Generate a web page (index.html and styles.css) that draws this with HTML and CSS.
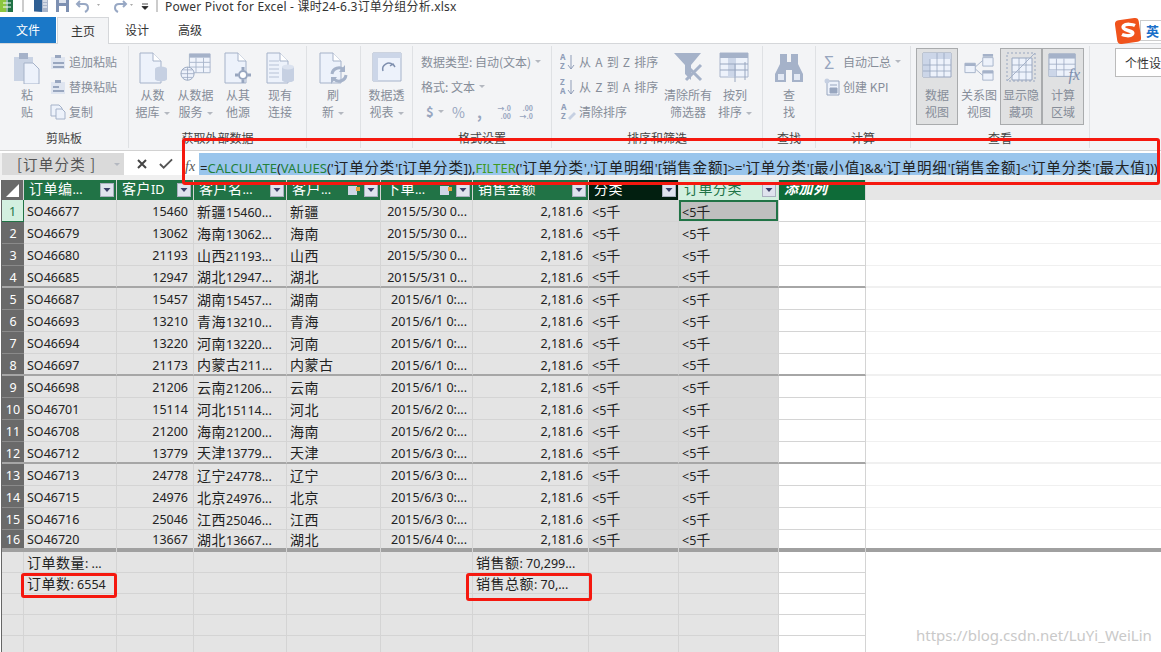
FILE: index.html
```html
<!DOCTYPE html>
<html lang="zh">
<head>
<meta charset="utf-8">
<title>Power Pivot for Excel</title>
<link rel="stylesheet" href="styles.css">
</head>
<body>
<div class="app">
  <div class="titlebar">
    <svg class="qat" width="160" height="17" viewBox="0 0 160 17">
      <rect x="0" y="-3" width="13" height="15" fill="#8cc63f"/><path d="M6-3h7v15H6z" fill="#217346"/><path d="M3 3h8M3 7h8M7-3v15" stroke="#fff"/>
      <path d="M23 0v12" stroke="#999"/>
      <path d="M34-2h14v14H34z" fill="#a9b5cb"/><path d="M34-1l8-1v14l-8-1z" fill="#2f5f94"/><path d="M43 1h4M43 4h4M43 7h4" stroke="#fff"/>
      <path d="M56-2h13v14H56z" fill="#7d90b2"/><path d="M59-2h7v5h-7z" fill="#dfe5f0"/><path d="M59 6h7v6h-7z" fill="#fff"/>
      <path d="M80 1l-3 3 3 3M77 4h7c3 0 4 2 4 4s-1 3-3 4" fill="none" stroke="#98a8c4" stroke-width="2"/>
      <path d="M97 4h3l-1.500 2z" fill="#aaa"/>
      <path d="M123 1l3 3-3 3M126 4h-7c-3 0-4 2-4 4s1 3 3 4" fill="none" stroke="#98a8c4" stroke-width="2"/>
      <path d="M130 4h3l-1.500 2z" fill="#aaa"/>
      <path d="M142 4h6M142 6.500h6l-3 3z" fill="#222" stroke="#222" stroke-width=".8"/>
      <path d="M157 0v12" stroke="#999"/>
    </svg>
    <span class="doc">Power Pivot for Excel - 课时24-6.3订单分组分析.xlsx</span>
  </div>

  <div class="tabs">
    <span class="tab file">文件</span>
    <span class="tab active">主页</span>
    <span class="tab design">设计</span>
    <span class="tab adv">高级</span>
  </div>

  <div class="ribbon">
    <section class="grp g1">
      <div class="big w-paste">
        <svg class="ico" viewBox="0 0 28 32"><path d="M1 5h19v24H1z" fill="#c9d3e4"/><path d="M6 1h9v6H6z" fill="#a5b2c9"/><path d="M11 11h9l6 6v15H11z" fill="#edf2fb" stroke="#a5b2c9"/></svg>
        <span>粘</span><span>贴</span>
      </div>
      <div class="smalls s-paste">
        <div class="sm"><svg class="si" viewBox="0 0 16 16"><path d="M1 3h14v12H1z" fill="#dfe5f0"/><path d="M5 1h6v3H5zM3 8h11v2H3zM3 12h11v2H3z" fill="#98a6bf"/></svg>追加粘贴</div>
        <div class="sm"><svg class="si" viewBox="0 0 16 16"><path d="M1 3h14v12H1z" fill="#dfe5f0"/><path d="M5 1h6v3H5zM3 7h6v2H3zM3 11h11v2H3z" fill="#98a6bf"/></svg>替换粘贴</div>
        <div class="sm"><svg class="si" viewBox="0 0 16 16"><path d="M1 1h8l3 3v8H1z" fill="#edf2fb" stroke="#a5b2c9"/><path d="M6 5h6l3 3v7H6z" fill="#edf2fb" stroke="#a5b2c9"/></svg>复制</div>
      </div>
      <div class="glabel">剪贴板</div>
    </section>

    <section class="grp g2">
      <div class="big w43">
        <svg class="ico" viewBox="0 0 30 32"><use href="#doc"/><ellipse cx="23" cy="17" rx="6" ry="2.500" fill="#c6d0e2"/><path d="M17 17h12v10c0 3-12 3-12 0z" fill="#c6d0e2"/></svg>
        <span>从数</span><span>据库<b class="ar"></b></span>
      </div>
      <div class="big w43">
        <svg class="ico" viewBox="0 0 34 32"><path d="M10 1h22v20H10z" fill="#f0f4fc" stroke="#aab6cc"/><path d="M10 1h22v4H10z" fill="#a5b2c9"/><path d="M10 10h22M10 15h22M17 5v16M25 5v16" stroke="#aab6cc"/><circle cx="8" cy="22" r="7" fill="#edf2fb" stroke="#98a6bf"/><path d="M1 22h14M8 15v14M3 18h10M3 26h10" stroke="#98a6bf" stroke-width=".8"/></svg>
        <span>从数据</span><span>服务<b class="ar"></b></span>
      </div>
      <div class="big w42">
        <svg class="ico" viewBox="0 0 30 32"><use href="#doc"/><circle cx="20" cy="23" r="4" fill="#fff" stroke="#98a6bf" stroke-width="2"/><path d="M20 15v3M20 28v3M12 23h3M25 23h3" stroke="#98a6bf" stroke-width="3"/></svg>
        <span>从其</span><span>他源</span>
      </div>
      <div class="big w42">
        <svg class="ico" viewBox="0 0 30 32"><use href="#doc"/><path d="M4 9h10M4 13h10M4 17h10M4 21h10M4 25h10" stroke="#b7c2d6"/><path d="M17 15h12v13c0 3-12 3-12 0z" fill="#c6d0e2"/><ellipse cx="23" cy="15" rx="6" ry="2.500" fill="#dbe2ef"/></svg>
        <span>现有</span><span>连接</span>
      </div>
      <div class="glabel">获取外部数据</div>
    </section>

    <section class="grp g3">
      <div class="big w53">
        <svg class="ico" viewBox="0 0 30 32"><use href="#doc"/><path d="M14 22a7 7 0 0 1 12-4M28 23a7 7 0 0 1-12 4" fill="none" stroke="#a5b2c9" stroke-width="3"/><path d="M27 13v7h-6zM13 32v-7h6z" fill="#a5b2c9"/></svg>
        <span>刷</span><span>新<b class="ar"></b></span>
      </div>
    </section>

    <section class="grp g4">
      <div class="big w52">
        <svg class="ico" viewBox="0 0 30 32"><path d="M1 1h28v28H1z" fill="#edf2fb" stroke="#a5b2c9"/><path d="M1 1h28v5H1zM1 1h5v28H1z" fill="#ccd6e8"/><path d="M11 19a6 6 0 0 1 10-6M23 15l-2-3-3 2" fill="none" stroke="#7e8fae" stroke-width="1.500"/></svg>
        <span>数据透</span><span>视表<b class="ar"></b></span>
      </div>
    </section>

    <section class="grp g5">
      <div class="smalls s-fmt">
        <div class="sm">数据类型: 自动(文本)<b class="ar"></b></div>
        <div class="sm">格式: 文本<b class="ar"></b></div>
        <div class="sm fmt-icons"><span class="dollar">$</span><b class="ar"></b><span class="pct">%</span><span class="cma">,</span><span class="dec">→.0<br>.00</span><span class="dec">.00<br>→.0</span></div>
      </div>
      <div class="glabel">格式设置</div>
    </section>

    <section class="grp g6">
      <div class="smalls s-sort">
        <div class="sm"><svg class="si" viewBox="0 0 16 18"><use href="#sortaz"/></svg>从 A 到 Z 排序</div>
        <div class="sm"><svg class="si" viewBox="0 0 16 18"><use href="#sortza"/></svg>从 Z 到 A 排序</div>
        <div class="sm"><svg class="si" viewBox="0 0 16 18"><text x="1" y="7" class="az">A</text><text x="1" y="16" class="az">Z</text><path d="M8 15l6-6 2 2-6 6z" fill="#c6d0e2"/></svg>清除排序</div>
      </div>
      <div class="big w-clear">
        <svg class="ico" viewBox="0 0 30 32"><path d="M1 1h27l-10 12v15l-6-6v-9z" fill="#a5b2c9"/><path d="M13 13l15 15M28 13L13 28" stroke="#a5b2c9" stroke-width="3"/></svg>
        <span>清除所有</span><span>筛选器</span>
      </div>
      <div class="big w-bycol">
        <svg class="ico" viewBox="0 0 32 32"><path d="M1 1h28v24H1z" fill="#edf2fb" stroke="#aab6cc"/><path d="M1 1h28v5H1z" fill="#a5b2c9"/><path d="M9 6h8v19H9z" fill="#ccd6e8"/><path d="M16 12v18M26 10v18M1 12h28M1 18h28" stroke="#98a6bf"/></svg>
        <span>按列</span><span>排序<b class="ar"></b></span>
      </div>
      <div class="glabel">排序和筛选</div>
    </section>

    <section class="grp g7">
      <div class="big w53">
        <svg class="ico" viewBox="0 0 30 32"><path d="M6 2h7v8h4V2h7v10l5 10v8H18V18h-6v12H1v-8l5-10z" fill="#a5b2c9"/><path d="M4 22h6v6H4zM20 22h6v6h-6z" fill="#e3e9f4"/></svg>
        <span>查</span><span>找</span>
      </div>
      <div class="glabel">查找</div>
    </section>

    <section class="grp g8">
      <div class="smalls s-calc">
        <div class="sm"><span class="sigma">Σ</span>自动汇总<b class="ar"></b></div>
        <div class="sm"><svg class="si" viewBox="0 0 16 18"><path d="M3 3h12v14H3z" fill="#edf2fb" stroke="#98a6bf"/><path d="M6 7h7M6 10h7v5H6z" fill="#98a6bf" stroke="#98a6bf"/><circle cx="3" cy="3" r="2.500" fill="#c6d0e2"/></svg>创建 KPI</div>
      </div>
      <div class="glabel">计算</div>
    </section>

    <section class="grp g9">
      <div class="views">
        <div class="big view on">
          <svg class="ico" viewBox="0 0 30 30"><path d="M1 1h28v24H1z" fill="#edf2fb" stroke="#98a6bf"/><path d="M1 1h28v6H1zM1 1h7v24H1z" fill="#ccd6e8"/><path d="M8 7v18M15 1v24M22 1v24M1 13h28M1 19h28" stroke="#98a6bf" stroke-width=".8"/></svg>
          <span>数据</span><span>视图</span>
        </div>
        <div class="big view">
          <svg class="ico" viewBox="0 0 32 30"><path d="M20 5h11v9H20zM1 11h11v10H1zM20 19h11v10H20z" fill="#edf2fb" stroke="#a5b2c9"/><path d="M20 1h11v3H20zM1 11h11v3H1zM20 19h11v3H20z" fill="#a5b2c9"/><path d="M12 15l8-7M12 17l8 7" stroke="#a5b2c9"/></svg>
          <span>关系图</span><span>视图</span>
        </div>
        <div class="big view on">
          <svg class="ico" viewBox="0 0 30 30"><path d="M1 1h28v28H1z" fill="none" stroke="#98a6bf" stroke-dasharray="2 2"/><path d="M6 6h20v22H6z" fill="#edf2fb" stroke="#98a6bf"/><path d="M13 6v22M20 6v22M6 13h20M6 20h20" stroke="#98a6bf" stroke-width=".8"/><path d="M1 29L29 1" stroke="#a5b2c9"/></svg>
          <span>显示隐</span><span>藏项</span>
        </div>
        <div class="big view on">
          <svg class="ico" viewBox="0 0 32 30"><path d="M1 1h28v24H1z" fill="#edf2fb" stroke="#98a6bf"/><path d="M1 1h28v5H1z" fill="#a5b2c9"/><path d="M1 12h28M1 18h28M9 6v19M17 6v19" stroke="#98a6bf" stroke-width=".8"/><path d="M1 18h8v7H1z" fill="#ccd6e8"/></svg>
          <span>计算</span><span>区域</span>
          <i class="fxmark">fx</i>
        </div>
      </div>
      <div class="glabel">查看</div>
    </section>
    <section class="grp g10"></section>
  </div>

  <div class="fbar">
    <div class="namebox">[订单分类 ]</div>
    <div class="namedrop"><b class="ar"></b></div>
    <div class="fbtns">
      <svg class="fb-x" width="10" height="12" viewBox="0 0 10 12"><path d="M1 2l8 8M9 2l-8 8" stroke="#444" stroke-width="2"/></svg>
      <svg class="fb-c" width="14" height="12" viewBox="0 0 15 12"><path d="M1 6l4 4 9-9" fill="none" stroke="#555" stroke-width="2"/></svg>
      <span class="fx">fx</span>
    </div>
    <div class="formula"><span class="f">=</span><span class="kw">CALCULATE</span>(<span class="kw">VALUES</span>('<span class="zh">订单分类</span>'[<span class="zh">订单分类</span>]),<span class="kw2">FILTER</span>('<span class="zh">订单分类</span>','<span class="zh">订单明细</span>'[<span class="zh">销售金额</span>]&gt;='<span class="zh">订单分类</span>'[<span class="zh">最小值</span>]&amp;&amp;'<span class="zh">订单明细</span>'[<span class="zh">销售金额</span>]&lt;'<span class="zh">订单分类</span>'[<span class="zh">最大值</span>]))</div>
  </div>

  <svg class="defs" width="0" height="0">
    <symbol id="doc" viewBox="0 0 30 32"><path d="M2 1h13l8 8v22H2z" fill="#edf2fb" stroke="#a5b2c9"/><path d="M15 1v8h8" fill="#fff" stroke="#a5b2c9"/></symbol>
    <symbol id="fbtn" viewBox="0 0 14 14"><rect x=".5" y=".5" width="13" height="13" fill="#dfe3ee" stroke="#aab0c0"/><path d="M3.500 5h7L7 9z" fill="#3b3f68"/></symbol>
    <symbol id="sortaz" viewBox="0 0 16 18"><text x="0" y="7" class="az">A</text><text x="0" y="16" class="az">Z</text><path d="M11 2v14M8 12l3 4 3-4" fill="none" stroke="#8f9db8"/></symbol>
    <symbol id="sortza" viewBox="0 0 16 18"><text x="0" y="7" class="az">Z</text><text x="0" y="16" class="az">A</text><path d="M11 2v14M8 12l3 4 3-4" fill="none" stroke="#8f9db8"/></symbol>
  </svg>

  <table class="grid">
    <colgroup><col class="c0"><col class="c1"><col class="c2"><col class="c3"><col class="c4"><col class="c5"><col class="c6"><col class="c7"><col class="c8"><col class="c9"><col class="c10"></colgroup>
    <thead>
      <tr>
        <th class="corner"><svg width="21" height="20" viewBox="0 0 21 20"><path d="M4 17L17 4v13z" fill="#fff"/></svg></th>
        <th><span class="zh">订单编</span>...<svg class="fl"><use href="#fbtn"/></svg></th>
        <th><span class="zh">客户</span>ID<svg class="fl"><use href="#fbtn"/></svg></th>
        <th><span class="zh">客户名</span>...<svg class="fl"><use href="#fbtn"/></svg></th>
        <th><span class="zh">客户</span>...<svg class="hy" viewBox="0 0 14 12"><path d="M1 2h9v9H1z" fill="#cfd6e4"/><path d="M9 3h4v4H9z" fill="#e6a23c"/></svg><svg class="fl"><use href="#fbtn"/></svg></th>
        <th><span class="zh">下单</span>...<svg class="hy" viewBox="0 0 14 12"><path d="M1 2h9v9H1z" fill="#cfd6e4"/><path d="M9 3h4v4H9z" fill="#e6a23c"/></svg><svg class="fl"><use href="#fbtn"/></svg></th>
        <th><span class="zh">销售金额</span><svg class="fl"><use href="#fbtn"/></svg></th>
        <th class="hdark"><span class="zh">分类</span><svg class="fl"><use href="#fbtn"/></svg></th>
        <th class="hlight"><span class="zh">订单分类</span><svg class="fl"><use href="#fbtn"/></svg></th>
        <th class="hadd"><span class="zh">添加列</span></th>
        <th class="hrest"></th>
      </tr>
    </thead>
    <tbody>
      <tr><th class="rh sel">1</th><td>SO46677</td><td class="r">15460</td><td><span class="zh">新疆</span>15460...</td><td><span class="zh">新疆</span></td><td class="r">2015/5/30 0...</td><td class="r">2,181.6</td><td class="d">&lt;5<span class="zh">千</span></td><td class="d cur">&lt;5<span class="zh">千</span></td><td class="a"></td><td class="x"></td></tr>
      <tr><th class="rh">2</th><td>SO46679</td><td class="r">13062</td><td><span class="zh">海南</span>13062...</td><td><span class="zh">海南</span></td><td class="r">2015/5/30 0...</td><td class="r">2,181.6</td><td class="d">&lt;5<span class="zh">千</span></td><td class="d">&lt;5<span class="zh">千</span></td><td class="a"></td><td class="x"></td></tr>
      <tr><th class="rh">3</th><td>SO46680</td><td class="r">21193</td><td><span class="zh">山西</span>21193...</td><td><span class="zh">山西</span></td><td class="r">2015/5/30 0...</td><td class="r">2,181.6</td><td class="d">&lt;5<span class="zh">千</span></td><td class="d">&lt;5<span class="zh">千</span></td><td class="a"></td><td class="x"></td></tr>
      <tr class="pg"><th class="rh">4</th><td>SO46685</td><td class="r">12947</td><td><span class="zh">湖北</span>12947...</td><td><span class="zh">湖北</span></td><td class="r">2015/5/31 0...</td><td class="r">2,181.6</td><td class="d">&lt;5<span class="zh">千</span></td><td class="d">&lt;5<span class="zh">千</span></td><td class="a"></td><td class="x"></td></tr>
      <tr><th class="rh">5</th><td>SO46687</td><td class="r">15457</td><td><span class="zh">湖南</span>15457...</td><td><span class="zh">湖南</span></td><td class="r">2015/6/1 0:...</td><td class="r">2,181.6</td><td class="d">&lt;5<span class="zh">千</span></td><td class="d">&lt;5<span class="zh">千</span></td><td class="a"></td><td class="x"></td></tr>
      <tr><th class="rh">6</th><td>SO46693</td><td class="r">13210</td><td><span class="zh">青海</span>13210...</td><td><span class="zh">青海</span></td><td class="r">2015/6/1 0:...</td><td class="r">2,181.6</td><td class="d">&lt;5<span class="zh">千</span></td><td class="d">&lt;5<span class="zh">千</span></td><td class="a"></td><td class="x"></td></tr>
      <tr><th class="rh">7</th><td>SO46694</td><td class="r">13220</td><td><span class="zh">河南</span>13220...</td><td><span class="zh">河南</span></td><td class="r">2015/6/1 0:...</td><td class="r">2,181.6</td><td class="d">&lt;5<span class="zh">千</span></td><td class="d">&lt;5<span class="zh">千</span></td><td class="a"></td><td class="x"></td></tr>
      <tr class="pg"><th class="rh">8</th><td>SO46697</td><td class="r">21173</td><td><span class="zh">内蒙古</span>211...</td><td><span class="zh">内蒙古</span></td><td class="r">2015/6/1 0:...</td><td class="r">2,181.6</td><td class="d">&lt;5<span class="zh">千</span></td><td class="d">&lt;5<span class="zh">千</span></td><td class="a"></td><td class="x"></td></tr>
      <tr><th class="rh">9</th><td>SO46698</td><td class="r">21206</td><td><span class="zh">云南</span>21206...</td><td><span class="zh">云南</span></td><td class="r">2015/6/1 0:...</td><td class="r">2,181.6</td><td class="d">&lt;5<span class="zh">千</span></td><td class="d">&lt;5<span class="zh">千</span></td><td class="a"></td><td class="x"></td></tr>
      <tr><th class="rh">10</th><td>SO46701</td><td class="r">15114</td><td><span class="zh">河北</span>15114...</td><td><span class="zh">河北</span></td><td class="r">2015/6/2 0:...</td><td class="r">2,181.6</td><td class="d">&lt;5<span class="zh">千</span></td><td class="d">&lt;5<span class="zh">千</span></td><td class="a"></td><td class="x"></td></tr>
      <tr><th class="rh">11</th><td>SO46708</td><td class="r">21200</td><td><span class="zh">海南</span>21200...</td><td><span class="zh">海南</span></td><td class="r">2015/6/2 0:...</td><td class="r">2,181.6</td><td class="d">&lt;5<span class="zh">千</span></td><td class="d">&lt;5<span class="zh">千</span></td><td class="a"></td><td class="x"></td></tr>
      <tr class="pg"><th class="rh">12</th><td>SO46712</td><td class="r">13779</td><td><span class="zh">天津</span>13779...</td><td><span class="zh">天津</span></td><td class="r">2015/6/3 0:...</td><td class="r">2,181.6</td><td class="d">&lt;5<span class="zh">千</span></td><td class="d">&lt;5<span class="zh">千</span></td><td class="a"></td><td class="x"></td></tr>
      <tr><th class="rh">13</th><td>SO46713</td><td class="r">24778</td><td><span class="zh">辽宁</span>24778...</td><td><span class="zh">辽宁</span></td><td class="r">2015/6/3 0:...</td><td class="r">2,181.6</td><td class="d">&lt;5<span class="zh">千</span></td><td class="d">&lt;5<span class="zh">千</span></td><td class="a"></td><td class="x"></td></tr>
      <tr><th class="rh">14</th><td>SO46715</td><td class="r">24976</td><td><span class="zh">北京</span>24976...</td><td><span class="zh">北京</span></td><td class="r">2015/6/3 0:...</td><td class="r">2,181.6</td><td class="d">&lt;5<span class="zh">千</span></td><td class="d">&lt;5<span class="zh">千</span></td><td class="a"></td><td class="x"></td></tr>
      <tr><th class="rh">15</th><td>SO46716</td><td class="r">25046</td><td><span class="zh">江西</span>25046...</td><td><span class="zh">江西</span></td><td class="r">2015/6/3 0:...</td><td class="r">2,181.6</td><td class="d">&lt;5<span class="zh">千</span></td><td class="d">&lt;5<span class="zh">千</span></td><td class="a"></td><td class="x"></td></tr>
      <tr class="last"><th class="rh">16</th><td>SO46720</td><td class="r">13667</td><td><span class="zh">湖北</span>13667...</td><td><span class="zh">湖北</span></td><td class="r">2015/6/4 0:...</td><td class="r">2,181.6</td><td class="d">&lt;5<span class="zh">千</span></td><td class="d">&lt;5<span class="zh">千</span></td><td class="a"></td><td class="x"></td></tr>
    </tbody>
    <tfoot>
      <tr><th class="fh"></th><td><span class="zh">订单数量</span>: ...</td><td></td><td></td><td></td><td></td><td><span class="zh">销售额</span>: 70,299...</td><td></td><td></td><td class="a"></td><td class="n"></td></tr>
      <tr><th class="fh"></th><td><span class="zh">订单数</span>: 6554</td><td></td><td></td><td></td><td></td><td><span class="zh">销售总额</span>: 70,...</td><td></td><td></td><td class="a"></td><td class="n"></td></tr>
      <tr><th class="fh"></th><td></td><td></td><td></td><td></td><td></td><td></td><td></td><td></td><td class="a"></td><td class="n"></td></tr>
      <tr><th class="fh"></th><td></td><td></td><td></td><td></td><td></td><td></td><td></td><td></td><td class="a"></td><td class="n"></td></tr>
      <tr><th class="fh"></th><td></td><td></td><td></td><td></td><td></td><td></td><td></td><td></td><td class="a"></td><td class="n"></td></tr>
    </tfoot>
  </table>

  <div class="redbox rb-formula"></div>
  <div class="redbox rb-count"></div>
  <div class="redbox rb-sales"></div>

  <div class="sogou"><svg width="29" height="28" viewBox="0 0 29 28"><rect x="2" y="2" width="24" height="24" rx="4" fill="#f0531c" transform="rotate(-8 14 14)"/><path d="M21 8.500c-2-1-9-2-11 0s0 4 4 5 6 2 4 4-8 1-10 0" fill="none" stroke="#fff" stroke-width="3.500"/></svg><span class="ying">英</span></div>
  <div class="tip">个性设</div>
  <div class="wm">https://blog.csdn.net/LuYi_WeiLin</div>
</div>
</body>
</html>
```

FILE: styles.css
```css
* { box-sizing: border-box; }
html, body { margin: 0; padding: 0; }
body { width: 1161px; height: 652px; overflow: hidden; background: #fff; font-family: "Noto Sans", "Noto Sans CJK SC", sans-serif; }
.app { position: relative; width: 1161px; height: 652px; overflow: hidden; display: flex; flex-direction: column; }

.titlebar { height: 17px; display: flex; flex: none; color: #333; font-size: 12px; line-height: 14px; }
.qat { flex: none; margin-right: 5px; }
.doc { font-family: "Noto Sans", "Noto Sans CJK SC", sans-serif; letter-spacing: .2px; }

.tabs { height: 27px; flex: none; display: flex; border-bottom: 1px solid #d5d7da; font-size: 12px; line-height: 25px; font-family: "Noto Sans CJK SC", sans-serif; color: #333; }
.tab { display: block; text-align: center; }
.file { width: 56px; background: #1a78c8; color: #fff; height: 26px; }
.active { width: 52px; margin-left: 1px; height: 27px; background: #f3f4f6; border: 1px solid #d5d7da; border-bottom: 0; }
.design { width: 56px; }
.adv { width: 50px; }

.ribbon { height: 107px; flex: none; display: flex; background: #f3f4f6; border-bottom: 1px solid #d2d2d2; font-family: "Noto Sans CJK SC", sans-serif; font-size: 12px; color: #868d99; }
.grp { position: relative; display: flex; border-right: 1px solid #dfe1e4; height: 102px; margin-top: 2px; flex: none; }
.g1 { width: 129px; padding-left: 7px; }
.g2 { width: 178px; padding-left: 2px; }
.g3 { width: 54px; }
.g4 { width: 52px; }
.g5 { width: 139px; padding-left: 8px; }
.g6 { width: 211px; padding-left: 8px; }
.g7 { width: 53px; }
.g8 { width: 95px; padding-left: 8px; }
.g9 { width: 179px; padding-left: 5px; }
.g10 { flex: 1; border: 0; }

.big { display: flex; flex-direction: column; align-items: center; line-height: 17px; height: 79px; flex: none; padding-top: 6px; position: relative; }
.big > span { white-space: nowrap; }
.ico { width: 32px; height: 32px; margin-bottom: 2px; flex: none; }
.w-paste { width: 40px; }
.w43 { width: 43px; }
.w42 { width: 42px; }
.w53 { width: 52px; }
.w52 { width: 51px; }
.w-clear { width: 52px; margin-left: 2px; }
.w-bycol { width: 42px; }

.ar { display: inline-block; width: 0; height: 0; border: 3px solid transparent; border-top: 3px solid #b4b8c0; border-bottom: 0; margin-left: 4px; vertical-align: middle; flex: none; }

.smalls { display: flex; flex-direction: column; padding-top: 3px; flex: none; }
.s-paste { margin-left: 3px; }
.s-sort { width: 100px; word-spacing: 1.5px; }
.sm { height: 25px; display: flex; align-items: center; white-space: nowrap; }
.si { width: 16px; height: 18px; margin-right: 3px; flex: none; }
.az { font: 700 8px "Noto Sans", sans-serif; fill: #8f9db8; }
.fmt-icons { gap: 0; padding-left: 5px; }
.dollar { width: 8px; flex: none; font-weight: 700; font-size: 13px; color: #98a6bf; }
.pct { flex: none; width: 13px; font-size: 14px; line-height: 16px; color: #98a6bf; margin-left: 8px; }
.cma { flex: none; width: 4px; font-size: 15px; font-weight: 700; color: #98a6bf; margin: 0 14px 0 12px; line-height: 10px; }
.dec { flex: none; width: 16px; font-size: 7px; line-height: 8px; font-weight: 700; color: #98a6bf; margin-right: 6px; text-align: right; }
.sigma { font-size: 17px; color: #98a6bf; margin-right: 5px; width: 14px; }

.views { display: flex; gap: 0; }
.view { width: 42px; height: 77px; margin-top: 2px; padding-top: 3px; border: 1px solid transparent; }
.view.on { background: #e0e1e2; border-color: #a9abad; }
.view .ico { width: 30px; height: 30px; margin-bottom: 4px; }
.fxmark { position: absolute; right: 3px; top: 17px; font: italic 16px "Liberation Serif", serif; color: #7e8fae; }

.glabel { position: absolute; left: 0; right: 0; top: 84px; text-align: center; color: #444; font-size: 12px; line-height: 16px; }

.fbar { height: 27px; flex: none; margin-top: 2px; padding: 0 0 5px 2px; display: flex; background: #f0f0f0; font-family: "Noto Sans", "Noto Sans CJK SC", sans-serif; }
.namebox { width: 103px; background: #dadada; color: #555; font: 14.5px/22px "Noto Sans CJK SC", sans-serif; padding-left: 15px; letter-spacing: 1.2px; white-space: nowrap; }
.namedrop { width: 19px; background: #dadada; display: flex; align-items: center; justify-content: center; }
.fbtns { width: 75px; background: #fff; display: flex; align-items: center; padding-left: 13px; gap: 12px; }
.fx { font: italic 14px/22px "Liberation Serif", serif; color: #555; margin-top: 5px; }
.formula { width: 958px; flex: none; font-size: 13px; line-height: 30px; height: 22px; white-space: nowrap; color: #222; overflow: hidden; padding-left: 1px; background: #99c5ec; }
.kw { color: #23803a; }
.kw2 { color: #3f9a1f; }
.formula .zh { font: 14.5px/14px "Noto Sans CJK SC", sans-serif; letter-spacing: .85px; }

.defs { position: absolute; }

.grid { table-layout: fixed; border-collapse: separate; border-spacing: 0; width: 1159px; margin: 0 0 0 2px; font-size: 12.5px; color: #222; flex: none; box-shadow: -1px 0 0 #666; }
.c0 { width: 22px; } .c1 { width: 93px; } .c2 { width: 77px; } .c3 { width: 93px; } .c4 { width: 94px; } .c5 { width: 92px; }
.c6 { width: 116px; } .c7 { width: 90px; } .c8 { width: 100px; } .c9 { width: 87px; } .c10 { width: 295px; }
.zh { font-family: "Noto Sans CJK SC", sans-serif; font-size: 14px; line-height: 14px; letter-spacing: .5px; }
.grid thead th { height: 20px; padding: 0 0 0 5px; background: #217346; color: #fff; font-weight: 400; text-align: left; border-right: 1px solid #d4d4d4; position: relative; white-space: nowrap; line-height: 18px; }
.grid thead .corner { background: #6a6a6a; padding: 0; }
.corner svg { display: block; }
.grid thead .hdark { background: #021f10; }
.grid thead .hlight { background: #d3f0e0; color: #217346; }
.grid thead .hadd { background: #0e6b38; font-style: italic; font-weight: 700; }
.grid thead .hrest { background: #e6e6e6; border: 0; }
.fl { position: absolute; right: 2px; top: 3px; width: 14px; height: 14px; }
.hy { position: absolute; right: 19px; top: 4px; width: 14px; height: 12px; }

.grid td { height: 22px; padding: 3px 5px 0 3px; background: #e4e4e4; border-right: 1px solid #d4d4d4; border-bottom: 1px solid #d4d4d4; white-space: nowrap; line-height: 16px; }
.grid td.r { text-align: right; }
.grid td.d { background: #d9d9d9; padding-left: 3px; }
.grid td.cur { background: #bfbfbf; box-shadow: inset 0 0 0 2px #217346; }
.grid td.a { background: #fff; }
.grid td.x { background: #fff; border-right: 0; border-bottom-color: #f0f0f0; }
.grid td.n { background: #fff; border: 0; }
.rh { height: 22px; background: #6a6a6a; color: #fff; font-weight: 400; text-align: center; border-bottom: 1px solid #8a8a8a; padding: 3px 0 0; font-size: 12.5px; line-height: 16px; }
.rh.sel { background: #d3f0e0; color: #217346; border-bottom-color: #217346; border-right: 1px solid #217346; }
.pg td, .pg th { border-bottom: 2px solid #a6a6a6; }
.grid tr.pg td.x { border-bottom: 2px solid #f0f0f0; }
.grid tbody tr.last td, .grid tbody tr.last th { border-bottom: 0; height: 22px; padding-top: 2px; vertical-align: top; box-shadow: inset 0 -4px 0 #a0a0a0; }
.grid tfoot td { height: 21px; line-height: 16px; padding-top: 2px; }
.grid tfoot td.a { background: #fff; }
.grid tfoot .fh { background: #e4e4e4; border-right: 1px solid #d4d4d4; border-bottom: 1px solid #d4d4d4; height: 21px; }

.redbox { position: absolute; border: 3px solid #f5180f; border-radius: 3px; }
.rb-formula { left: 182px; top: 138px; width: 978px; height: 47px; }
.rb-count { left: 21px; top: 573px; width: 96px; height: 25px; }
.rb-sales { left: 466px; top: 573px; width: 126px; height: 28px; }

.sogou { position: absolute; left: 1114px; top: 17px; width: 47px; height: 28px; display: flex; }
.sogou svg { flex: none; z-index: 1; }
.ying { flex: 1; background: #fff; border: 1px solid #ccc; border-right: 0; margin: 3px 0 4px -3px; padding-left: 5px; color: #1a6fc9; font: 700 13px/20px "Noto Sans CJK SC", sans-serif; }
.tip { position: absolute; left: 1115px; top: 48px; width: 46px; height: 29px; background: #fff; border: 1px solid #bbb; border-right: 0; font: 12px/27px "Noto Sans CJK SC", sans-serif; color: #333; padding-left: 9px; white-space: nowrap; }
.wm { position: absolute; left: 916px; top: 625px; font: 15px "Noto Sans", sans-serif; color: #c9c9c9; }
```
